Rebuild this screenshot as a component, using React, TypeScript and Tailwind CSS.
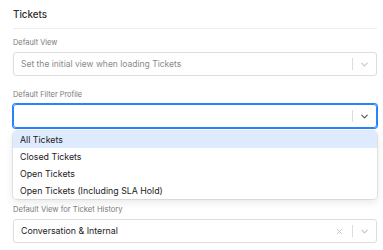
import { ChevronDown, X } from "lucide-react";

const options = [
  "All Tickets",
  "Closed Tickets",
  "Open Tickets",
  "Open Tickets (Including SLA Hold)",
];

function Indicators({ clear, dark }: { clear?: boolean; dark?: boolean }) {
  return (
    <div className="flex items-center h-full">
      {clear && <X className="w-[9px] h-[9px] text-[#c8c8c8] mr-[8px]" strokeWidth={2.5} />}
      <span className="w-px h-[12px] bg-[#dcdcdc]" />
      <div className="w-[23px] flex justify-center">
        <ChevronDown
          className={`w-[11px] h-[11px] ${dark ? "text-[#555]" : "text-[#c8c8c8]"}`}
          strokeWidth={2.5}
        />
      </div>
    </div>
  );
}

export default function App() {
  return (
    <div className="bg-white w-[383px] h-[250px] pl-[13px] pr-[6px] pt-[8px] font-['Inter',sans-serif] overflow-hidden">
      <h2 className="text-[9.8px] leading-[14px] font-medium text-[#2d2d2d]">Tickets</h2>
      <div className="mt-[6px] border-t border-[#eeeeee]" />

      <label className="block mt-[8px] mb-[3px] text-[7.4px] leading-[12px] text-[#7a7a7a]">Default View</label>
      <div className="h-[24px] border border-[#dddddd] rounded-[3px] flex items-center pl-[7px]">
        <span className="flex-1 text-[8.5px] text-[#8a8a8a]">Set the initial view when loading Tickets</span>
        <Indicators />
      </div>

      <label className="block mt-[13px] mb-[3px] text-[7.4px] leading-[12px] text-[#7a7a7a]">Default Filter Profile</label>
      <div className="h-[24px] border border-[#2684ff] ring-1 ring-[#2684ff] rounded-[3px] flex items-center pl-[7px]">
        <span className="flex-1" />
        <Indicators dark />
      </div>

      <ul className="mt-[3px] rounded-[4px] bg-white shadow-[0_0_0_1px_rgba(0,0,0,0.08),0_3px_8px_rgba(0,0,0,0.1)] overflow-hidden">
        {options.map((o, i) => (
          <li
            key={o}
            className={`h-[17px] flex items-center pl-[7px] text-[8.8px] text-[#222] ${i === 0 ? "bg-[#deebff]" : ""}`}
          >
            {o}
          </li>
        ))}
      </ul>

      <label className="block mt-[5px] mb-[3px] text-[7.6px] leading-[12px] text-[#7a7a7a]">Default View for Ticket History</label>
      <div className="h-[24px] border border-[#dddddd] rounded-[3px] flex items-center pl-[7px]">
        <span className="flex-1 text-[8.8px] text-[#222]">Conversation &amp; Internal</span>
        <Indicators clear />
      </div>
    </div>
  );
}
